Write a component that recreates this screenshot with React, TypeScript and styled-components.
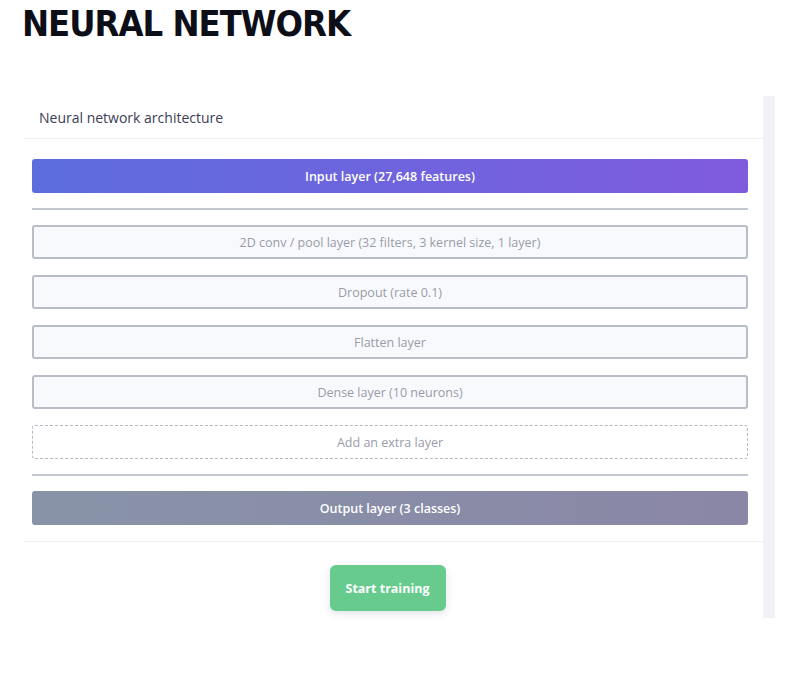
import React from 'react';
import styled, { createGlobalStyle } from 'styled-components';

const GlobalStyle = createGlobalStyle`
  html, body {
    margin: 0;
    padding: 0;
    background: #ffffff;
    font-family: "Open Sans", "Liberation Sans", sans-serif;
  }
`;

const Page = styled.div`
  width: 808px;
  height: 674px;
  background: #fff;
  overflow: hidden;
`;

const Title = styled.h1`
  margin: 0;
  padding: 4px 0 0 22px;
  height: 96px;
  box-sizing: border-box;
  font-family: "DejaVu Sans Condensed", "DejaVu Sans", sans-serif;
  font-stretch: condensed;
  font-weight: 700;
  font-size: 36px;
  letter-spacing: -1px;
  line-height: 40px;
  color: #0d0f18;
`;

const Frame = styled.div`
  display: flex;
  margin-left: 24px;
  width: 751px;
`;

const Panel = styled.section`
  flex: 1;
  background: #fff;
`;

const Track = styled.div`
  width: 12px;
  background: #f1f1f7;
`;

const PanelHeader = styled.header`
  height: 42px;
  padding-left: 15px;
  display: flex;
  align-items: center;
  font-size: 14px;
  color: #3b3c56;
  border-bottom: 1px solid #eff0f4;
`;

const Stack = styled.div`
  display: flex;
  flex-direction: column;
  gap: 16px;
  padding: 20px 15px 16px 8px;
  border-bottom: 1px solid #eff0f4;
`;

const Layer = styled.div<{ $kind: 'input' | 'hidden' | 'extra' | 'output' }>`
  height: 34px;
  box-sizing: border-box;
  border-radius: 3px;
  display: flex;
  align-items: center;
  justify-content: center;
  font-size: 12.5px;
  ${({ $kind }) =>
    $kind === 'input'
      ? `background: linear-gradient(90deg, #5d6ddd, #7f5bdd);
         color: #fff; font-weight: 600;`
      : $kind === 'output'
      ? `background: linear-gradient(90deg, #8893a8, #8a87a6);
         color: #fff; font-weight: 600;`
      : $kind === 'extra'
      ? `border: 1px dashed #b4b8c2; background: #fff; color: #989ca9;`
      : `border: 2px solid #b9bdc8; background: #f8f9fc; color: #989ca9;`}
`;

const Divider = styled.div`
  height: 2px;
  background: #c3c7cf;
  margin: -1px 0;
`;

const Footer = styled.div`
  display: flex;
  justify-content: center;
  padding: 23px 0 7px;
  padding-right: 12px;
`;

const TrainButton = styled.button`
  width: 116px;
  height: 46px;
  border: none;
  border-radius: 6px;
  background: #66cb8d;
  color: #fff;
  font-family: "Open Sans", "Liberation Sans", sans-serif;
  font-weight: 700;
  font-size: 12.5px;
  box-shadow: 0 3px 8px rgba(60, 80, 100, 0.15);
  cursor: pointer;
`;

const hiddenLayers = [
  '2D conv / pool layer (32 filters, 3 kernel size, 1 layer)',
  'Dropout (rate 0.1)',
  'Flatten layer',
  'Dense layer (10 neurons)',
];

export default function App() {
  return (
    <Page>
      <GlobalStyle />
      <Title>NEURAL NETWORK</Title>
      <Frame>
        <Panel>
          <PanelHeader>Neural network architecture</PanelHeader>
          <Stack>
            <Layer $kind="input">Input layer (27,648 features)</Layer>
            <Divider />
            {hiddenLayers.map((l) => (
              <Layer key={l} $kind="hidden">
                {l}
              </Layer>
            ))}
            <Layer $kind="extra">Add an extra layer</Layer>
            <Divider />
            <Layer $kind="output">Output layer (3 classes)</Layer>
          </Stack>
          <Footer>
            <TrainButton>Start training</TrainButton>
          </Footer>
        </Panel>
        <Track />
      </Frame>
    </Page>
  );
}
